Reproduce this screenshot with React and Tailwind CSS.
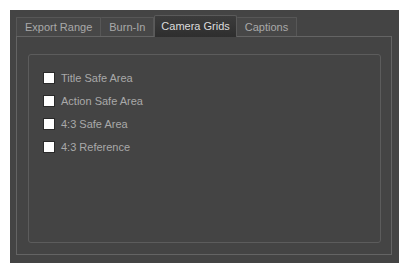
import React, { useState } from 'react';

const tabs = ['Export Range', 'Burn-In', 'Camera Grids', 'Captions'];
const options = ['Title Safe Area', 'Action Safe Area', '4:3 Safe Area', '4:3 Reference'];

const App = () => {
  const [active, setActive] = useState(2);
  const [checked, setChecked] = useState({});

  return (
    <div className="w-[409px] h-[273px] bg-white pt-[10px] pl-[10px]" style={{ fontFamily: '"Liberation Sans", Arial, sans-serif' }}>
      <div className="w-[389px] h-[253px] bg-[#444444] flex flex-col pl-[6px] pr-[7px] pt-[4px] pb-[8px]">
        <div className="flex items-end h-[22px]">
          {tabs.map((tab, i) => {
            const selected = i === active;
            return (
              <button
                key={tab}
                onClick={() => setActive(i)}
                className={
                  selected
                    ? 'h-[22px] px-[6px] text-[11px] leading-none text-[#dcdcdc] bg-gradient-to-b from-[#3c3c3c] to-[#2e2e2e] border border-b-0 border-[#5a5a5a] rounded-t-[2px] flex items-center -mb-px relative z-10'
                    : 'h-[19px] px-[8px] text-[11px] leading-none text-[#a9a9a9] bg-[#474747] border border-b-0 border-[#575757] border-l-0 first:border-l rounded-t-[1px] flex items-center pt-px'
                }
              >
                {tab}
              </button>
            );
          })}
        </div>
        <div className="flex-1 border border-[#646464] pt-[17px] pl-[11px] pr-[10px] pb-[11px] flex">
          <div className="flex-1 border border-[#5c5c5c] rounded-[3px] pt-[17px] pl-[14px] flex flex-col gap-[11px]">
            {options.map((opt) => (
              <label key={opt} className="flex items-center h-[12px] gap-[6px] cursor-pointer">
                <span
                  onClick={() => setChecked({ ...checked, [opt]: !checked[opt] })}
                  className="w-[12px] h-[12px] bg-white border border-[#2a2a2a] flex items-center justify-center text-[10px] leading-none text-black"
                >
                  {checked[opt] ? '✓' : ''}
                </span>
                <span className="text-[11px] leading-none text-[#a9a9a9]">{opt}</span>
              </label>
            ))}
          </div>
        </div>
      </div>
    </div>
  );
};

export default App;
